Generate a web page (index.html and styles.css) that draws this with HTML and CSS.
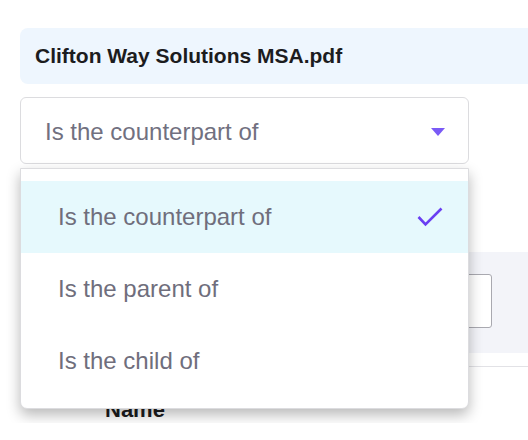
FILE: index.html
```html
<!DOCTYPE html>
<html>
<head>
<meta charset="utf-8">
<link rel="stylesheet" href="styles.css">
</head>
<body>
<div class="page">
  <div class="file-title">Clifton Way Solutions MSA.pdf</div>
  <div class="select-wrap">
    <div class="select">
      <span class="select-value">Is the counterpart of</span>
      <span class="caret"></span>
    </div>
    <ul class="menu">
      <li class="option selected">
        <span>Is the counterpart of</span>
        <svg class="check" width="26" height="20" viewBox="0 0 26 20"><polyline points="1.5,10 8.5,17.5 24.5,1.5" fill="none" stroke="#6a3ff2" stroke-width="2.6"/></svg>
      </li>
      <li class="option"><span>Is the parent of</span></li>
      <li class="option"><span>Is the child of</span></li>
    </ul>
  </div>
  <div class="panel">
    <div class="field"></div>
  </div>
  <div class="divider"></div>
  <div class="table-head">Name</div>
</div>
</body>
</html>
```
FILE: styles.css
```css
html, body {
  margin: 0;
  padding: 0;
  background: #ffffff;
  overflow: hidden;
  font-family: "Liberation Sans", Arial, sans-serif;
}

.page {
  width: 508px;
  padding: 28px 0 0 20px;
}

.file-title {
  height: 56px;
  box-sizing: border-box;
  background: #eef6fe;
  border-radius: 8px 0 0 8px;
  padding-left: 15px;
  display: flex;
  align-items: center;
  font-weight: bold;
  font-size: 21px;
  color: #1c1c1e;
}

.select-wrap {
  position: relative;
  width: 449px;
  margin-top: 13px;
}

.select {
  height: 67px;
  box-sizing: border-box;
  border: 1px solid #dcdcdf;
  border-radius: 6px;
  display: flex;
  align-items: center;
  justify-content: space-between;
  padding: 2px 23px 0 24px;
  font-size: 24px;
  color: #717080;
}

.caret {
  width: 0;
  height: 0;
  border-left: 7px solid transparent;
  border-right: 7px solid transparent;
  border-top: 8px solid #7a5af6;
  margin-top: 1px;
}

.menu {
  position: absolute;
  top: 71px;
  left: 0;
  right: 0;
  margin: 0;
  list-style: none;
  padding: 12px 0 11px;
  background: #ffffff;
  border: 1px solid #dcdcdf;
  border-radius: 0 0 7px 7px;
  box-shadow: 0 6px 14px rgba(0, 0, 0, 0.28);
  z-index: 2;
}

.option {
  height: 72px;
  display: flex;
  align-items: center;
  justify-content: space-between;
  padding: 0 25px 0 37px;
  font-size: 24px;
  color: #6f6e7c;
}

.option.selected {
  background: #e6f9fd;
}

.check {
  display: block;
}

.panel {
  margin-top: 88px;
  height: 101px;
  box-sizing: border-box;
  background: #f3f4f9;
  padding: 22px 36px 0 0;
  display: flex;
  justify-content: flex-end;
}

.field {
  width: 380px;
  height: 54px;
  box-sizing: border-box;
  background: #ffffff;
  border: 1px solid #a9a9b0;
  border-radius: 3px;
}

.divider {
  margin-top: 13px;
  height: 1px;
  background: #e2e2e6;
}

.table-head {
  padding: 30px 0 0 85px;
  font-size: 22px;
  line-height: 26px;
  font-weight: bold;
  color: #1c1c1e;
}
```
